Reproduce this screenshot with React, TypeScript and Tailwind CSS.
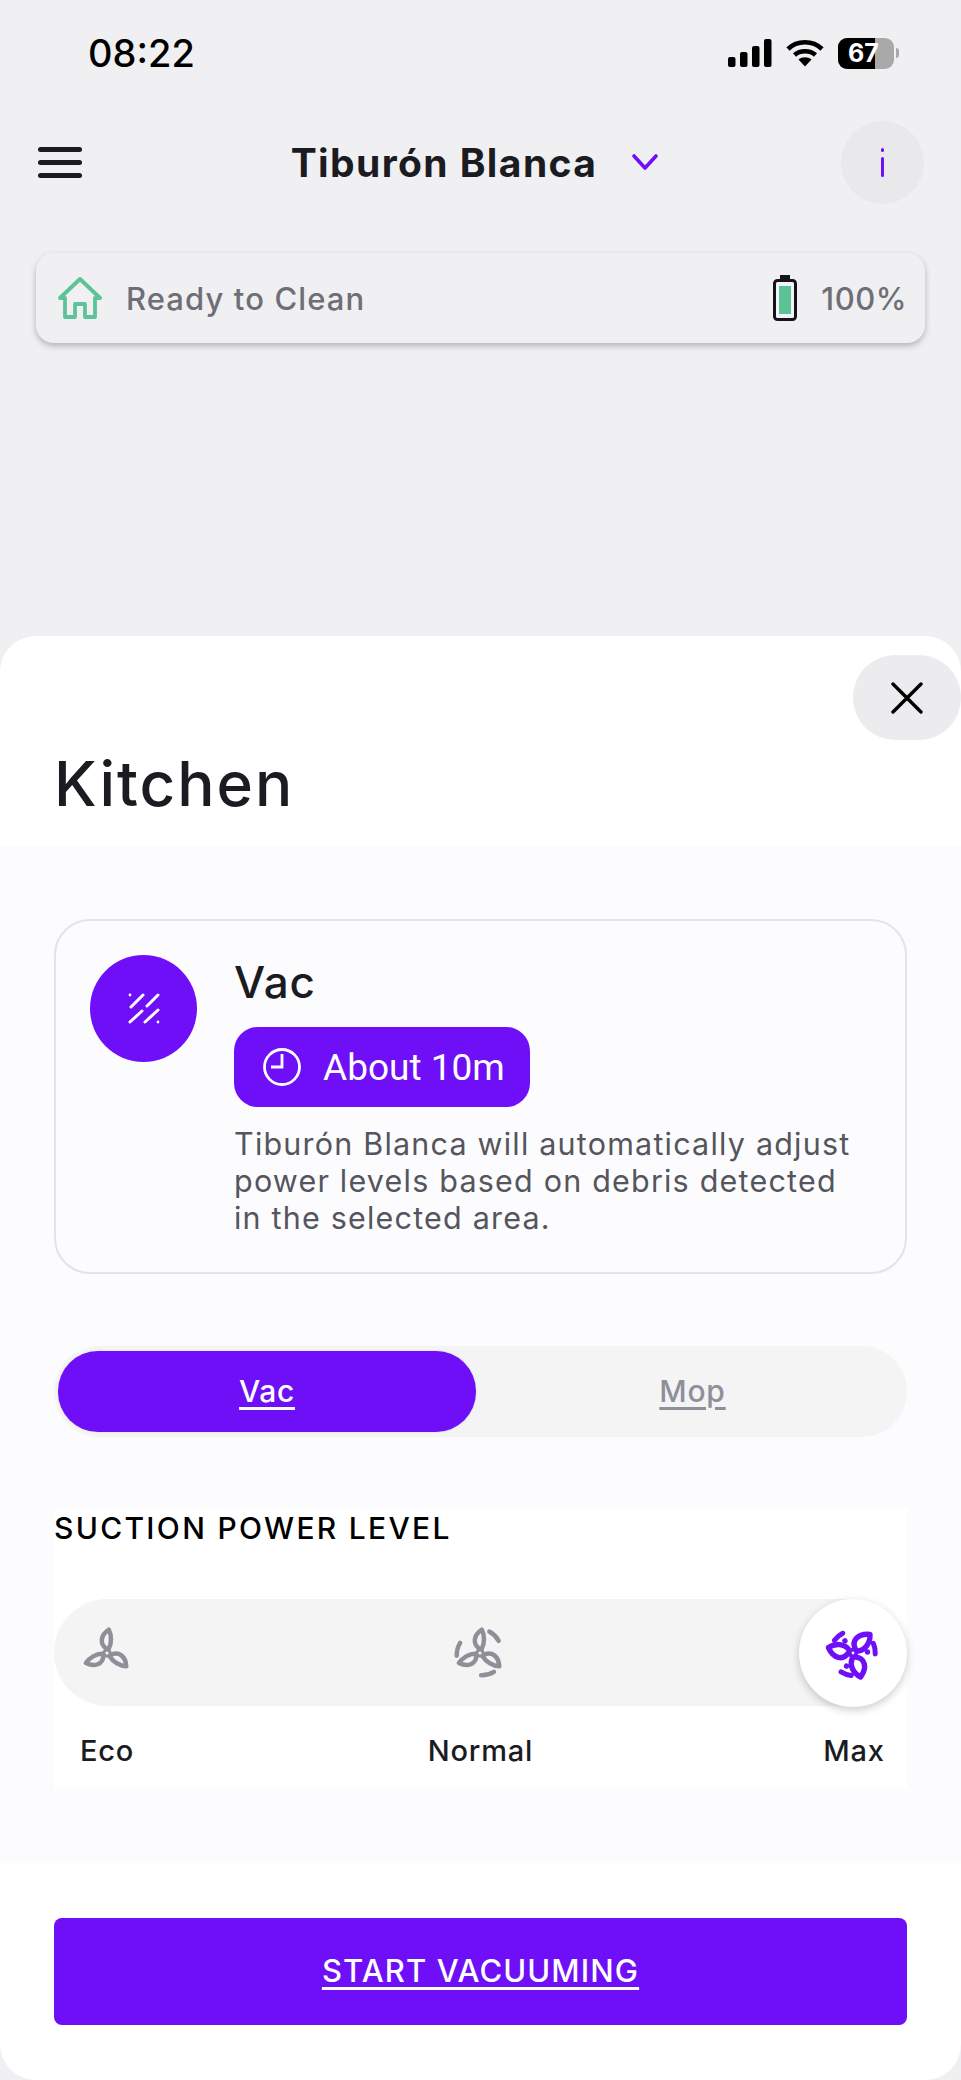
const FONT = "font-['Inter','Noto_Sans',sans-serif]";
const PURPLE = "#6f0ff7";

function Blades({ rot, wide, color, sw }: { rot: number; wide?: boolean; color: string; sw: number }) {
  const d = wide
    ? "M-1 -5 C-9 -9 -9 -19 2 -26 C8 -19 8 -10 3 -5"
    : "M-1 -5 C-8 -10 -7 -19 2 -25 C5 -19 5 -10 2 -5";
  return (
    <>
      {[0, 120, 240].map((a) => (
        <path key={a} d={d} transform={`rotate(${a + rot})`} fill="none" stroke={color} strokeWidth={sw} strokeLinecap="round" strokeLinejoin="round" />
      ))}
      <circle r="3.4" fill="none" stroke={color} strokeWidth={sw * 0.7} />
    </>
  );
}

function EcoFan() {
  return (
    <svg width="56" height="56" viewBox="-30 -30 60 60">
      <Blades rot={0} color="#8f8f9a" sw={4.8} />
    </svg>
  );
}

function NormalFan() {
  return (
    <svg width="56" height="56" viewBox="-30 -30 60 60">
      <Blades rot={0} color="#8f8f9a" sw={4.8} />
      {[0, 120, 240].map((a) => (
        <path key={a} d="M10 -23 A25 25 0 0 1 20 -13" transform={`rotate(${a})`} fill="none" stroke="#8f8f9a" strokeWidth="4.8" strokeLinecap="round" />
      ))}
    </svg>
  );
}

function MaxFan() {
  return (
    <svg width="58" height="58" viewBox="-30 -30 60 60">
      <Blades rot={38} wide color={PURPLE} sw={5.6} />
      {[0, 120, 240].map((a) => (
        <g key={a} transform={`rotate(${a})`}>
          <path d="M21 -10 A25 25 0 0 1 23 1" fill="none" stroke={PURPLE} strokeWidth="5.2" strokeLinecap="round" />
          <circle cx="15" cy="-1" r="2.8" fill={PURPLE} />
        </g>
      ))}
    </svg>
  );
}

function StatusBar() {
  return (
    <div className="flex h-[106px] items-center justify-between pl-[88px] pr-[62px]">
      <span className={`${FONT} text-[38px] font-medium leading-none text-black`}>08:22</span>
      <div className="flex items-center">
        <svg width="44" height="28" viewBox="0 0 44 28" fill="#000">
          <rect x="0" y="18" width="7.5" height="10" rx="2" />
          <rect x="12" y="13" width="7.5" height="15" rx="2" />
          <rect x="24" y="7" width="7.5" height="21" rx="2" />
          <rect x="36" y="0" width="7.5" height="28" rx="2" />
        </svg>
        <svg className="ml-[14px]" width="38" height="28" viewBox="0 0 38 28" fill="none" stroke="#000" strokeWidth="4.6">
          <path d="M2 10 C11 1 27 1 36 10" />
          <path d="M8.5 16 C14 11 24 11 29.5 16" />
          <path d="M19 27.5 L12.5 20.5 C16 17.5 22 17.5 25.5 20.5 Z" fill="#000" stroke="none" />
        </svg>
        <div className="ml-[14px] flex h-[31px] w-[56px] overflow-hidden rounded-[9px] bg-[#a9a9a9]">
          <div className="flex h-full w-[37px] shrink-0 items-center overflow-visible bg-black pl-[10px]">
            <span className={`${FONT} text-[25px] font-bold leading-none text-white`}>67</span>
          </div>
        </div>
        <div className="ml-[2px] h-[10px] w-[3px] rounded-r-full bg-[#a9a9a9]" />
      </div>
    </div>
  );
}

function Header() {
  return (
    <div className="mt-[8px] flex h-[96px] items-center justify-between pl-[38px] pr-[37px]">
      <div className="flex w-[44px] flex-col gap-[8px]">
        <div className="h-[5px] rounded-full bg-[#1b1b22]" />
        <div className="h-[5px] rounded-full bg-[#1b1b22]" />
        <div className="h-[5px] rounded-full bg-[#1b1b22]" />
      </div>
      <div className="flex items-center pl-[27px]">
        <span className={`${FONT} text-[39px] font-bold leading-none tracking-[1.4px] text-[#1b1b22]`}>Tiburón Blanca</span>
        <svg className="ml-[34px]" width="28" height="18" viewBox="0 0 28 18" fill="none" stroke={PURPLE} strokeWidth="3.6" strokeLinecap="round" strokeLinejoin="round">
          <path d="M3 3 L14 15 L25 3" />
        </svg>
      </div>
      <div className="flex h-[83px] w-[83px] items-center justify-center rounded-full bg-[#e9e9eb]">
        <div className="flex flex-col items-center gap-[5px]">
          <div className="h-[4px] w-[3px] rounded-full bg-[#6f0ff7]" />
          <div className="h-[20px] w-[3px] rounded-full bg-[#6f0ff7]" />
        </div>
      </div>
    </div>
  );
}

function StatusCard() {
  return (
    <div className="mx-[36px] mt-[43px] flex h-[90px] items-center justify-between rounded-[18px] bg-[#f0f0f2] pl-[22px] pr-[18px] shadow-[0_3px_6px_rgba(0,0,0,0.25)]">
      <div className="flex items-center gap-[24px]">
        <svg width="44" height="42" viewBox="0 0 44 42" fill="none" stroke="#5cc396" strokeWidth="3.8" strokeLinejoin="round" strokeLinecap="round">
          <path d="M2 21 L22 2 L42 21 L37 21 L37 40 L27 40 L27 27 L17 27 L17 40 L7 40 L7 21 Z" />
        </svg>
        <span className={`${FONT} text-[31px] font-medium leading-none tracking-[1.1px] text-[#6e6e76]`}>Ready to Clean</span>
      </div>
      <div className="flex items-center gap-[24px]">
        <svg width="24" height="46" viewBox="0 0 24 46">
          <rect x="7" y="0" width="10" height="7" fill="#14141a" />
          <rect x="1.5" y="5.5" width="21" height="39" rx="3" fill="#f4f4f6" stroke="#14141a" strokeWidth="3" />
          <rect x="6" y="11" width="12" height="28" fill="#5cc396" />
        </svg>
        <span className={`${FONT} text-[31px] font-medium leading-none tracking-[0.5px] text-[#6e6e76]`}>100%</span>
      </div>
    </div>
  );
}

function VacCard() {
  return (
    <div className="flex h-[355px] gap-[37px] rounded-[36px] border-2 border-[#e3e3e8] pl-[34px] pr-[20px] pt-[34px]">
      <div className="flex h-[107px] w-[107px] shrink-0 items-center justify-center rounded-full bg-[#6f0ff7]">
        <svg width="32" height="32" viewBox="-16 -16 32 32" fill="none" stroke="#fff" strokeWidth="3" strokeLinecap="round">
          <path d="M-13 -2 L-1 -14 M3 -3 L14 -14 M-14 13 L-2 2 M1 13 L14 1" />
          <circle cx="-14" cy="-14" r="1.4" fill="#fff" stroke="none" />
          <circle cx="14" cy="13" r="1.4" fill="#fff" stroke="none" />
        </svg>
      </div>
      <div className="flex flex-col items-start">
        <span className={`${FONT} mt-[5px] text-[44px] font-medium leading-none tracking-[0.8px] text-[#1b1b22]`}>Vac</span>
        <div className="mt-[23px] flex h-[80px] w-[296px] items-center gap-[22px] rounded-[24px] bg-[#6f0ff7] pl-[29px]">
          <svg width="38" height="38" viewBox="-19 -19 38 38" fill="none" stroke="#fff" strokeWidth="2.8">
            <circle r="17.5" />
            <path d="M0 -13 L0 0 L-11 0" />
          </svg>
          <span className="font-['Roboto',sans-serif] text-[37px] leading-none text-white">About 10m</span>
        </div>
        <p className={`${FONT} mt-[18px] w-[625px] text-[30.5px] leading-[37px] tracking-[1.2px] text-[#55555c]`}>
          Tiburón Blanca will automatically adjust power levels based on debris detected in the selected area.
        </p>
      </div>
    </div>
  );
}

function Toggle() {
  return (
    <div className="mt-[72px] flex h-[91px] items-center rounded-full bg-[#f4f4f5] pl-[4px] pr-[4px]">
      <div className={`${FONT} flex h-[81px] w-[418px] items-center justify-center rounded-[40px] bg-[#6f0ff7] text-[30px] font-medium tracking-[0.6px] text-white underline underline-offset-[5px] shadow-[0_0_2px_rgba(0,0,0,0.15)]`}>
        Vac
      </div>
      <div className={`${FONT} flex flex-1 items-center justify-center pl-[6px] text-[30px] font-medium tracking-[0.8px] text-[#8f8f9a] underline underline-offset-[5px]`}>
        Mop
      </div>
    </div>
  );
}

function Suction() {
  return (
    <div className="mt-[71px] flex h-[281px] flex-col bg-white">
      <span className={`${FONT} mt-[4px] text-[30px] font-medium leading-[32px] tracking-[2.3px] whitespace-nowrap text-black`}>SUCTION POWER LEVEL</span>
      <div className="mt-[55px] flex h-[107px] items-center justify-between rounded-full bg-[#f4f4f5]">
        <div className="flex w-[106px] justify-center"><EcoFan /></div>
        <div className="flex w-[106px] justify-center"><NormalFan /></div>
        <div className="flex h-[108px] w-[108px] items-center justify-center rounded-full bg-white shadow-[0_3px_8px_rgba(0,0,0,0.2)]"><MaxFan /></div>
      </div>
      <div className={`${FONT} mt-[28px] flex justify-between text-[29px] font-medium leading-[34px] tracking-[0.8px] text-[#1b1b22]`}>
        <span className="w-[106px] text-center">Eco</span>
        <span className="w-[106px] whitespace-nowrap text-center">Normal</span>
        <span className="w-[106px] text-center">Max</span>
      </div>
    </div>
  );
}

export default function App() {
  return (
    <div className="flex h-[2080px] w-[961px] flex-col overflow-hidden bg-[#f0f0f2]">
      <StatusBar />
      <Header />
      <StatusCard />
      <div className="mt-[293px] flex flex-1 flex-col overflow-hidden rounded-[36px] bg-white">
        <div className="flex h-[210px] flex-col">
          <div className="mt-[19px] flex justify-end">
            <div className="flex h-[85px] w-[108px] items-center justify-center rounded-[42px] bg-[#ececee]">
              <svg width="32" height="32" viewBox="0 0 32 32" fill="none" stroke="#000" strokeWidth="3.4" strokeLinecap="round">
                <path d="M2 2 L30 30 M30 2 L2 30" />
              </svg>
            </div>
          </div>
          <h1 className={`${FONT} ml-[54px] mt-[11px] text-[62px] font-medium leading-[66px] tracking-[2px] text-[#1b1b22]`}>Kitchen</h1>
        </div>
        <div className="flex h-[1017px] flex-col bg-[#fcfcff] px-[54px] pt-[73px]">
          <VacCard />
          <Toggle />
          <Suction />
        </div>
        <div className="flex flex-1 flex-col px-[54px] pt-[55px]">
          <div className={`${FONT} flex h-[107px] items-center justify-center rounded-[8px] bg-[#6f0ff7] text-[31px] font-medium tracking-[1.1px] text-white underline underline-offset-[5px]`}>
            START VACUUMING
          </div>
        </div>
      </div>
    </div>
  );
}
